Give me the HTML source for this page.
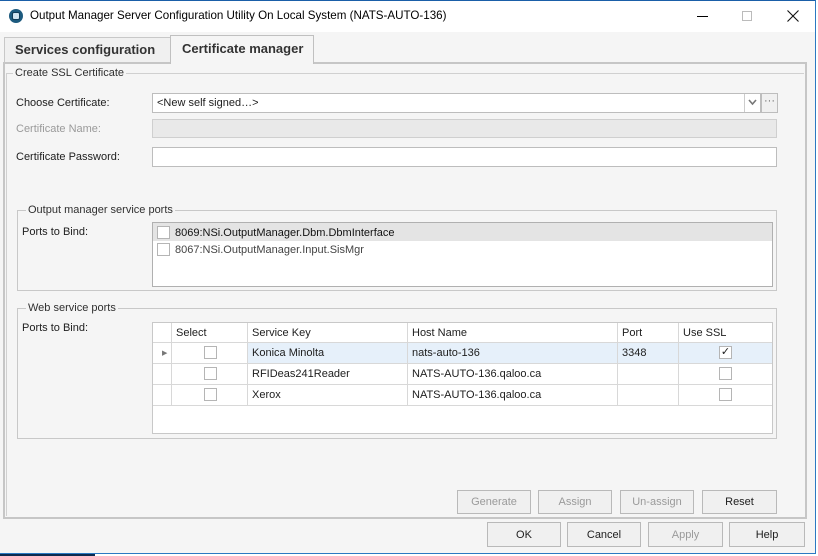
<!DOCTYPE html>
<html><head><style>
*{box-sizing:border-box;margin:0;padding:0}
body{width:818px;height:556px;overflow:hidden;background:#fff;font-family:"Liberation Sans",sans-serif;font-size:11px;color:#202020;position:relative}
.a{position:absolute}
.win{left:0;top:0;width:816px;height:554px;background:#f5f5f5;border-top:1px solid #1a5fa8;border-right:1px solid #2b79c2;border-bottom:1px solid #2b79c2}
.box{border:1px solid #c8c8c8}
.inp{background:#fff;border:1px solid #bdbdbd}
.btn{border:1px solid #b9b9b9;background:#f0f0f0;text-align:center;line-height:22px;font-size:11px}
.dis{color:#9a9a9a}
.leg{background:#f5f5f5;padding:0 2px;color:#303030}
.cb{width:13px;height:13px;border:1px solid #b5b5b5;background:#fff}
.c{position:absolute;top:0;height:100%;border-left:1px solid #d8d8d8;padding-left:4px;line-height:20px}
</style></head><body>
<div class="a" style="left:0;top:552px;width:95px;height:4px;background:#0c2a4f"></div>
<div class="a win"></div>
<div class="a" style="left:0;top:1px;width:815px;height:31px;background:#fff"></div>
<div class="a" style="left:9px;top:9px;width:14px;height:14px;border-radius:50%;background:#1c5a7e"></div>
<div class="a" style="left:12px;top:12px;width:8px;height:8px;border-radius:2px;background:#cfe3ef;border:1px solid #0f3c58"></div>
<div class="a" style="left:30px;top:9px;font-size:11.6px;color:#000">Output Manager Server Configuration Utility On Local System (NATS-AUTO-136)</div>
<div class="a" style="left:697px;top:16px;width:11px;height:1px;background:#000"></div>
<div class="a" style="left:742px;top:11px;width:10px;height:10px;border:1px solid #bbb"></div>
<svg class="a" style="left:787px;top:10px" width="12" height="12"><path d="M0.5 0.5L11.5 11.5M11.5 0.5L0.5 11.5" stroke="#111" stroke-width="1.1"/></svg>
<!-- tabs -->
<div class="a" style="left:4px;top:37px;width:167px;height:26px;border:1px solid #c8c8c8;border-bottom:none;background:#f0f0f0;font-weight:bold;font-size:13px;line-height:24px;padding-left:10px;color:#333">Services configuration</div>
<div class="a" style="left:170px;top:35px;width:144px;height:29px;border:1px solid #c0c0c0;border-bottom:none;background:#f5f5f5;font-weight:bold;font-size:13px;line-height:26px;padding-left:11px;color:#333;z-index:2">Certificate manager</div>
<div class="a" style="left:3px;top:62px;width:804px;height:457px;border:2px solid #c6c6c6"></div>
<div class="a" style="left:6px;top:73px;width:798px;height:1px;background:#d0d0d0"></div>
<div class="a" style="left:6px;top:73px;width:1px;height:443px;background:#d0d0d0"></div>
<div class="a leg" style="left:13px;top:67px">Create SSL Certificate</div>
<div class="a" style="left:16px;top:97px">Choose Certificate:</div>
<div class="a inp" style="left:152px;top:93px;width:609px;height:20px;padding:3px 4px">&lt;New self signed…&gt;</div>
<div class="a" style="left:744px;top:94px;width:1px;height:18px;background:#ccc"></div>
<svg class="a" style="left:748px;top:99px" width="9" height="7"><path d="M1 1L4.5 5L8 1" stroke="#777" stroke-width="1.6" fill="none"/></svg>
<div class="a inp" style="left:761px;top:93px;width:17px;height:20px;background:#f0f0f0;text-align:center;line-height:14px;color:#666">···</div>
<div class="a dis" style="left:16px;top:123px">Certificate Name:</div>
<div class="a" style="left:152px;top:119px;width:625px;height:19px;background:#e9e9e9;border:1px solid #cfcfcf"></div>
<div class="a" style="left:16px;top:151px">Certificate Password:</div>
<div class="a inp" style="left:152px;top:147px;width:625px;height:20px"></div>
<!-- group 2 -->
<div class="a box" style="left:17px;top:210px;width:760px;height:81px"></div>
<div class="a leg" style="left:26px;top:204px">Output manager service ports</div>
<div class="a" style="left:22px;top:226px">Ports to Bind:</div>
<div class="a inp" style="left:152px;top:222px;width:621px;height:65px;border-color:#b0b0b0"></div>
<div class="a" style="left:153px;top:223px;width:619px;height:18px;background:#e4e4e4"></div>
<div class="a cb" style="left:157px;top:226px"></div>
<div class="a" style="left:175px;top:227px;color:#111">8069:NSi.OutputManager.Dbm.DbmInterface</div>
<div class="a cb" style="left:157px;top:243px"></div>
<div class="a" style="left:175px;top:244px;color:#444">8067:NSi.OutputManager.Input.SisMgr</div>
<!-- group 3 -->
<div class="a box" style="left:17px;top:308px;width:760px;height:131px"></div>
<div class="a leg" style="left:26px;top:302px">Web service ports</div>
<div class="a" style="left:22px;top:322px">Ports to Bind:</div>
<div class="a inp" style="left:152px;top:322px;width:621px;height:112px;border-color:#c8c8c8"></div>
<div class="a" style="left:153px;top:323px;width:619px;height:20px;border-bottom:1px solid #d8d8d8">
 <div class="c" style="left:18px">Select</div><div class="c" style="left:94px">Service Key</div><div class="c" style="left:254px">Host Name</div><div class="c" style="left:464px">Port</div><div class="c" style="left:525px">Use SSL</div>
</div>
<div class="a" style="left:153px;top:343px;width:619px;height:21px;border-bottom:1px solid #d8d8d8">
 <div class="a" style="left:9px;top:6px;font-size:7px;color:#777">▶</div>
 <div class="c" style="left:18px;width:76px"><div class="a cb" style="left:32px;top:3px"></div></div>
 <div class="c" style="left:94px;width:525px;background:#e6f0fa">Konica Minolta</div>
 <div class="c" style="left:254px">nats-auto-136</div><div class="c" style="left:464px">3348</div>
 <div class="c" style="left:525px"><div class="a cb" style="left:40px;top:3px;font-size:11px;line-height:11px;text-align:center">✓</div></div>
</div>
<div class="a" style="left:153px;top:364px;width:619px;height:21px;border-bottom:1px solid #d8d8d8">
 <div class="c" style="left:18px;width:76px"><div class="a cb" style="left:32px;top:3px"></div></div>
 <div class="c" style="left:94px">RFIDeas241Reader</div><div class="c" style="left:254px">NATS-AUTO-136.qaloo.ca</div><div class="c" style="left:464px"></div>
 <div class="c" style="left:525px"><div class="a cb" style="left:40px;top:3px"></div></div>
</div>
<div class="a" style="left:153px;top:385px;width:619px;height:21px;border-bottom:1px solid #d8d8d8">
 <div class="c" style="left:18px;width:76px"><div class="a cb" style="left:32px;top:3px"></div></div>
 <div class="c" style="left:94px">Xerox</div><div class="c" style="left:254px">NATS-AUTO-136.qaloo.ca</div><div class="c" style="left:464px"></div>
 <div class="c" style="left:525px"><div class="a cb" style="left:40px;top:3px"></div></div>
</div>
<!-- buttons -->
<div class="a btn dis" style="left:457px;top:490px;width:74px;height:24px">Generate</div>
<div class="a btn dis" style="left:538px;top:490px;width:74px;height:24px">Assign</div>
<div class="a btn dis" style="left:620px;top:490px;width:74px;height:24px">Un-assign</div>
<div class="a btn" style="left:702px;top:490px;width:75px;height:24px">Reset</div>
<div class="a btn" style="left:487px;top:522px;width:74px;height:25px;line-height:24px">OK</div>
<div class="a btn" style="left:567px;top:522px;width:74px;height:25px;line-height:24px">Cancel</div>
<div class="a btn dis" style="left:648px;top:522px;width:75px;height:25px;line-height:24px">Apply</div>
<div class="a btn" style="left:729px;top:522px;width:76px;height:25px;line-height:24px">Help</div>
</body></html>
